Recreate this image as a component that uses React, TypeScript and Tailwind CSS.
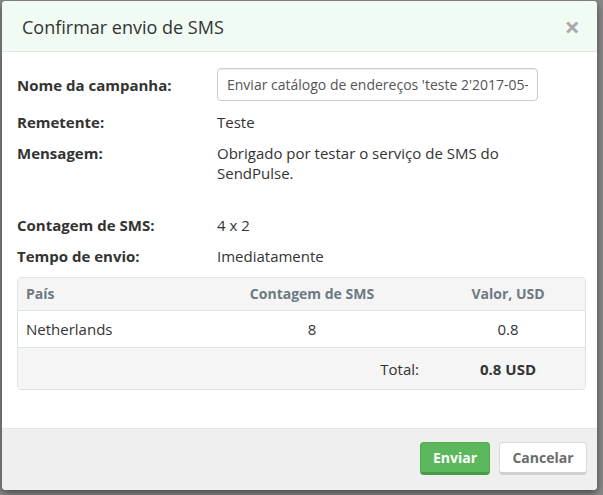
const ROWS = [
  { country: 'Netherlands', count: '8', value: '0.8' },
];

export default function App() {
  return (
    <div className="w-[603px] h-[495px] bg-[#8a8a8a] overflow-hidden font-['Open_Sans',sans-serif] text-[15px] text-[#333]">
      <div className="ml-[2px] mt-[1px] w-[595px] h-[489px] bg-white rounded-[4px] overflow-hidden shadow-[0_3px_9px_rgba(0,0,0,0.5)] flex flex-col">
        {/* Header */}
        <div className="h-[51px] shrink-0 bg-[#f0fbf3] border-b border-[#e5e5e5] pl-5 pr-[17px] flex items-center justify-between">
          <h4 className="text-[18px] leading-[20px] text-[#333] mt-[1px]">Confirmar envio de SMS</h4>
          <button type="button" className="text-[27px] font-bold leading-none text-[#aaa] mt-[1px]">×</button>
        </div>

        {/* Body */}
        <div className="flex-1 pl-[15px] pr-[11px] pt-[16px] leading-[20px]">
          <div className="grid grid-cols-[200px_1fr] items-center">
            <span className="font-bold">Nome da campanha:</span>
            <input
              readOnly
              value="Enviar catálogo de endereços 'teste 2'2017-05-"
              className="w-[321px] h-[33px] border border-[#ccc] rounded-[4px] px-[9px] text-[14px] text-[#555] shadow-[inset_0_1px_1px_rgba(0,0,0,0.075)] outline-none"
            />
          </div>

          <div className="grid grid-cols-[200px_1fr] mt-[11px]">
            <span className="font-bold">Remetente:</span>
            <span>Teste</span>
          </div>

          <div className="grid grid-cols-[200px_1fr] mt-[11px]">
            <span className="font-bold">Mensagem:</span>
            <span className="w-[320px]">Obrigado por testar o serviço de SMS do SendPulse.</span>
          </div>

          <div className="grid grid-cols-[200px_1fr] mt-[32px]">
            <span className="font-bold">Contagem de SMS:</span>
            <span>4 x 2</span>
          </div>

          <div className="grid grid-cols-[200px_1fr] mt-[11px]">
            <span className="font-bold">Tempo de envio:</span>
            <span>Imediatamente</span>
          </div>

          {/* Table */}
          <div className="mt-[11px] border border-[#dde4e8] rounded-[4px] overflow-hidden">
            <div className="grid grid-cols-[175px_238px_1fr] h-[33px] items-center bg-[#f5f5f5] border-b border-[#dde4e8] text-[14px] font-bold text-[#6d7a83]">
              <span className="pl-2">País</span>
              <span className="text-center">Contagem de SMS</span>
              <span className="text-center">Valor, USD</span>
            </div>
            {ROWS.map(r => (
              <div key={r.country} className="grid grid-cols-[175px_238px_1fr] h-[37px] items-center border-b border-[#dde4e8]">
                <span className="pl-2">{r.country}</span>
                <span className="text-center">{r.count}</span>
                <span className="text-center">{r.value}</span>
              </div>
            ))}
            <div className="grid grid-cols-[175px_238px_1fr] h-[41px] items-center bg-[#f5f5f5]">
              <span />
              <span className="text-right pr-3">Total:</span>
              <span className="text-center font-bold">0.8 USD</span>
            </div>
          </div>
        </div>

        {/* Footer */}
        <div className="h-[62px] shrink-0 bg-[#efefef] border-t border-[#e5e5e5] flex justify-end items-start gap-[9px] pt-[13px] pr-[10px] text-[14px]">
          <button type="button" className="w-[70px] h-[33px] rounded-[4px] bg-[#5cb85c] border border-[#4cae4c] border-b-[3px] border-b-[#449d44] text-white font-bold">
            Enviar
          </button>
          <button type="button" className="w-[88px] h-[33px] rounded-[4px] bg-white border border-[#d9d9d9] border-b-[3px] border-b-[#d0d0d0] text-[#6b6b6b] font-bold">
            Cancelar
          </button>
        </div>
      </div>
    </div>
  );
}
